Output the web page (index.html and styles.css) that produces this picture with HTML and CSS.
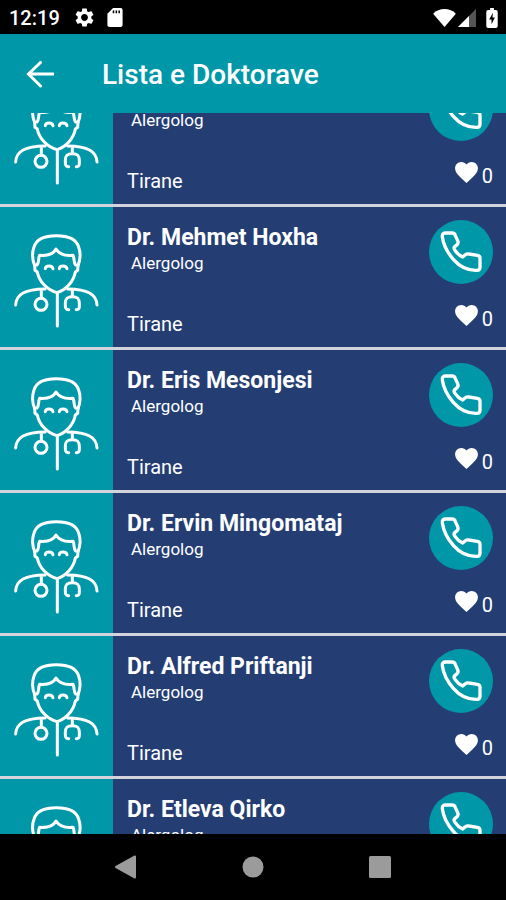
FILE: index.html
```html
<!DOCTYPE html>
<html lang="sq">
<head>
<meta charset="utf-8">
<meta name="viewport" content="width=device-width, initial-scale=1">
<title>Lista e Doktorave</title>
<link rel="stylesheet" href="styles.css">
</head>
<body>
<svg class="defs" aria-hidden="true">
  <symbol id="doctor" viewBox="40 98 258 285">
    <g fill="none" stroke="currentColor" stroke-width="9" stroke-linecap="round" stroke-linejoin="round">
      <path d="M105 196C97 176 98 154 103 140C110 116 136 106 170 106S230 116 237 140C242 154 243 176 235 196"/>
      <path d="M105 194L106 210L113 215C118 243 142 269 172 277C200 268 222 243 227 215L234 210L235 194"/>
      <path d="M112 194C119 187 115 174 120 165C143 167 161 161 169 146C178 161 197 167 220 165C225 174 221 187 228 194"/>
      <path d="M137 205C138 194 158 194 160 205M179 205C180 194 200 194 202 205"/>
      <path d="M48 314C50 281 76 267 136 266M204 266C264 267 290 281 292 314M173 278V377M125 268V293M218 268V287"/>
      <circle cx="124" cy="312" r="18"/>
      <path d="M207 328C196 329 197 318 197 309C197 295 202 289 218 289S239 295 239 309C239 318 241 329 230 328"/>
    </g>
  </symbol>
  <symbol id="phone" viewBox="0 0 192 192">
    <path d="M50 39H69C75 39 78 42 79 47L86 62C89 69 88 72 82 76L77 80C74 83 75 87 78 91C84 100 92 107 101 111L108 105C112 102 115 101 120 102L145 106C151 107 153 110 153 115V142C153 148 150 151 144 151C118 152 93 141 73 118C54 96 43 73 40 50C39 43 43 39 50 39Z" fill="none" stroke="currentColor" stroke-width="10" stroke-linejoin="round"/>
  </symbol>
  <symbol id="heart" viewBox="2 3 20 18.4">
    <path d="M12 21.35l-1.450-1.320C5.400 15.360 2 12.280 2 8.500 2 5.420 4.420 3 7.500 3c1.740 0 3.410.81 4.500 2.090C13.090 3.810 14.760 3 16.500 3 19.580 3 22 5.420 22 8.500c0 3.780-3.400 6.860-8.550 11.540L12 21.350z" fill="currentColor"/>
  </symbol>
</svg>

<div class="screen">
  <div class="status">
    <span class="clock">12:19</span>
    <svg class="gear" viewBox="2 2 20 20" aria-hidden="true"><path fill="currentColor" d="M19.140 12.940c.04-.3.060-.61.060-.94 0-.32-.02-.64-.07-.94l2.030-1.580c.18-.14.230-.41.120-.61l-1.920-3.320c-.12-.22-.37-.29-.59-.22l-2.390.96c-.5-.38-1.030-.7-1.620-.94l-.36-2.540c-.04-.24-.24-.41-.48-.41h-3.840c-.24 0-.43.170-.47.410l-.36 2.540c-.59.240-1.130.570-1.620.940l-2.390-.96c-.22-.08-.47 0-.59.220L2.740 8.870c-.12.210-.08.470.120.610l2.030 1.580c-.05.300-.09.630-.09.940s.02.640.070.940l-2.030 1.580c-.18.140-.23.410-.12.610l1.920 3.320c.12.220.370.290.590.220l2.390-.96c.5.380 1.030.700 1.620.940l.36 2.540c.05.240.240.410.480.410h3.840c.24 0 .44-.17.470-.41l.36-2.540c.59-.24 1.130-.56 1.620-.94l2.390.960c.22.080.470 0 .59-.22l1.920-3.320c.12-.22.070-.47-.12-.61l-2.010-1.580zM12 15.600c-1.980 0-3.600-1.620-3.600-3.600s1.620-3.600 3.600-3.600 3.600 1.620 3.600 3.600-1.620 3.600-3.600 3.600z"/></svg>
    <svg class="card-icon" viewBox="4 2 16 20" aria-hidden="true"><path fill="currentColor" fill-rule="evenodd" d="M18 2h-8L4 8v12c0 1.100.9 2 2 2h12c1.100 0 2-.9 2-2V4c0-1.100-.9-2-2-2zM9.600 4.500h1.600v3H9.600zM12.600 4.500h1.600v3h-1.600zM15.600 4.500h1.600v3h-1.600z"/></svg>
    <svg class="wifi" viewBox="0 0 24 19" aria-hidden="true"><path fill="currentColor" d="M12 19L0 5C6-1.500 18-1.500 24 5Z"/></svg>
    <svg class="signal" viewBox="0 0 18 18" aria-hidden="true"><path fill="#555" d="M0 18L18 0V18Z"/><path fill="currentColor" d="M0 18L11 7V18Z"/></svg>
    <svg class="battery" viewBox="0 0 12 21" aria-hidden="true"><path fill="currentColor" d="M4 0H8V2H10Q12 2 12 4V19Q12 21 10 21H2Q0 21 0 19V4Q0 2 2 2H4Z"/><path fill="#000" d="M7 5L3 12H5.500V17L9 10H6.500Z"/></svg>
  </div>

  <header class="appbar">
    <button class="back" type="button" aria-label="Kthehu">
      <svg viewBox="0 0 28 28" aria-hidden="true"><path d="M27 13H3M14.500 1.500L2.500 13L14.500 25" fill="none" stroke="currentColor" stroke-width="3" stroke-linecap="round"/></svg>
    </button>
    <h1>Lista e Doktorave</h1>
  </header>

  <main class="viewport">
    <ul class="doctors">
      <li class="doctor">
        <div class="avatar"><svg><use href="#doctor"/></svg></div>
        <div class="info"><h2></h2><p class="field">Alergolog</p><p class="city">Tirane</p></div>
        <div class="actions"><button class="call" type="button" aria-label="Telefono"><svg><use href="#phone"/></svg></button><div class="likes"><svg><use href="#heart"/></svg><span>0</span></div></div>
      </li>
      <li class="doctor">
        <div class="avatar"><svg><use href="#doctor"/></svg></div>
        <div class="info"><h2>Dr. Mehmet Hoxha</h2><p class="field">Alergolog</p><p class="city">Tirane</p></div>
        <div class="actions"><button class="call" type="button" aria-label="Telefono"><svg><use href="#phone"/></svg></button><div class="likes"><svg><use href="#heart"/></svg><span>0</span></div></div>
      </li>
      <li class="doctor">
        <div class="avatar"><svg><use href="#doctor"/></svg></div>
        <div class="info"><h2>Dr. Eris Mesonjesi</h2><p class="field">Alergolog</p><p class="city">Tirane</p></div>
        <div class="actions"><button class="call" type="button" aria-label="Telefono"><svg><use href="#phone"/></svg></button><div class="likes"><svg><use href="#heart"/></svg><span>0</span></div></div>
      </li>
      <li class="doctor">
        <div class="avatar"><svg><use href="#doctor"/></svg></div>
        <div class="info"><h2>Dr. Ervin Mingomataj</h2><p class="field">Alergolog</p><p class="city">Tirane</p></div>
        <div class="actions"><button class="call" type="button" aria-label="Telefono"><svg><use href="#phone"/></svg></button><div class="likes"><svg><use href="#heart"/></svg><span>0</span></div></div>
      </li>
      <li class="doctor">
        <div class="avatar"><svg><use href="#doctor"/></svg></div>
        <div class="info"><h2>Dr. Alfred Priftanji</h2><p class="field">Alergolog</p><p class="city">Tirane</p></div>
        <div class="actions"><button class="call" type="button" aria-label="Telefono"><svg><use href="#phone"/></svg></button><div class="likes"><svg><use href="#heart"/></svg><span>0</span></div></div>
      </li>
      <li class="doctor">
        <div class="avatar"><svg><use href="#doctor"/></svg></div>
        <div class="info"><h2>Dr. Etleva Qirko</h2><p class="field">Alergolog</p></div>
        <div class="actions"><button class="call" type="button" aria-label="Telefono"><svg><use href="#phone"/></svg></button></div>
      </li>
    </ul>
  </main>

  <nav class="navbar">
    <button type="button" aria-label="Prapa"><svg viewBox="0 0 24 24" aria-hidden="true"><path d="M2 12L21 1.500V22.500Z" fill="currentColor" stroke="currentColor" stroke-width="2" stroke-linejoin="round"/></svg></button>
    <button type="button" aria-label="Kreu"><svg viewBox="0 0 24 24" aria-hidden="true"><circle cx="12" cy="12" r="10.500" fill="currentColor"/></svg></button>
    <button type="button" aria-label="Aplikacionet"><svg viewBox="0 0 24 24" aria-hidden="true"><rect x="1" y="1" width="22" height="22" rx="1.500" fill="currentColor"/></svg></button>
  </nav>
</div>
</body>
</html>
```

FILE: styles.css
```css
* {
  box-sizing: border-box;
}

body,
h1,
h2,
p,
ul {
  margin: 0;
  padding: 0;
}

body {
  background: #000;
  color: #fff;
  font-family: Roboto, "Liberation Sans", sans-serif;
}

button {
  padding: 0;
  border: 0;
  background: none;
  color: inherit;
}

svg {
  display: block;
}

.defs {
  display: none;
}

.screen {
  display: flex;
  flex-direction: column;
  height: 100vh;
}

.status {
  display: flex;
  flex: none;
  align-items: center;
  height: 34px;
  padding: 1px 8px 0 9px;
}

.clock {
  font-size: 20px;
  font-weight: 500;
}

.gear {
  width: 19px;
  height: 19px;
  margin-left: 15px;
}

.card-icon {
  width: 16px;
  height: 19px;
  margin-left: 13px;
}

.wifi {
  width: 23px;
  height: 18px;
  margin-left: auto;
}

.signal {
  width: 18px;
  height: 18px;
  margin-left: 2px;
}

.battery {
  width: 12px;
  height: 20px;
  margin-left: 10px;
}

.appbar {
  display: flex;
  flex: none;
  align-items: center;
  gap: 48px;
  height: 79px;
  padding: 3px 26px 0;
  background: #0098a8;
}

.back svg {
  width: 28px;
  height: 28px;
}

.appbar h1 {
  font-size: 28px;
  font-weight: 500;
  line-height: 32px;
}

.viewport {
  flex: 1;
  min-height: 0;
  overflow: hidden;
}

/* The list is scrolled part of the way through its first row. */
.doctors {
  margin-top: -49px;
  list-style: none;
}

.doctor {
  display: flex;
  height: 143px;
  border-bottom: 3px solid #d3d3de;
  background: #243e74;
}

.avatar {
  flex: none;
  width: 113px;
  padding: 26px 13px 0;
  background: #0098a8;
}

.avatar svg {
  width: 86px;
  height: 95px;
}

.info {
  flex: 1;
  padding: 17px 0 0 14px;
}

.info h2 {
  height: 28px;
  font-size: 23px;
  font-weight: 700;
  line-height: 28px;
}

.field {
  padding-left: 4px;
  font-size: 17px;
  line-height: 22px;
}

.city {
  margin-top: 38px;
  font-size: 20px;
  line-height: 24px;
}

.actions {
  display: flex;
  flex: none;
  flex-direction: column;
  align-items: flex-end;
  padding: 13px 13px 0 0;
}

.call {
  width: 64px;
  height: 64px;
  border-radius: 50%;
  background: #0098a8;
}

.call svg {
  width: 64px;
  height: 64px;
}

.likes {
  display: flex;
  gap: 4px;
  margin-top: 21px;
  font-size: 20px;
  line-height: 28px;
}

.likes svg {
  width: 23px;
  height: 21px;
}

.navbar {
  display: flex;
  flex: none;
  align-items: center;
  justify-content: center;
  gap: 103px;
  height: 66px;
  color: #9b9b9b;
}

.navbar svg {
  width: 24px;
  height: 24px;
}
```
